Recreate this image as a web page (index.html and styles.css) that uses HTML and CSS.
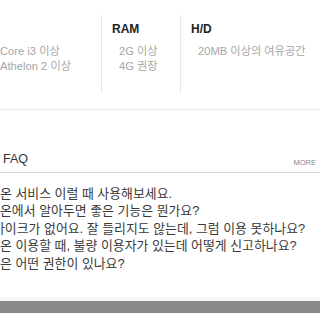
FILE: index.html
```html
<!DOCTYPE html>
<html lang="ko">
<head>
    <meta charset="UTF-8">
    <meta name="viewport" content="width=device-width, initial-scale=1.0">
    <title>시스템 사양 / FAQ</title>
    <link rel="stylesheet" href="styles.css">
</head>
<body>

    <div class="spec">
        <div class="spec-col spec-cpu">
            <ul class="spec-list">
                <li>Core i3 이상</li>
                <li>Athelon 2 이상</li>
            </ul>
        </div>
        <div class="spec-col spec-ram">
            <h4 class="spec-title">RAM</h4>
            <ul class="spec-list">
                <li>2G 이상</li>
                <li>4G 권장</li>
            </ul>
        </div>
        <div class="spec-col spec-hd">
            <h4 class="spec-title">H/D</h4>
            <ul class="spec-list">
                <li>20MB 이상의 여유공간</li>
            </ul>
        </div>
    </div>

    <div class="faq">
        <div class="faq-head">
            <h3 class="faq-title">FAQ</h3>
            <a class="faq-more" href="#">MORE</a>
        </div>
        <ul class="faq-list">
            <li><a href="#">온 서비스 이럴 때 사용해보세요.</a></li>
            <li><a href="#">온에서 알아두면 좋은 기능은 뭔가요?</a></li>
            <li class="cut"><a href="#">마이크가 없어요. 잘 들리지도 않는데, 그럼 이용 못하나요?</a></li>
            <li><a href="#">온 이용할 때, 불량 이용자가 있는데 어떻게 신고하나요?</a></li>
            <li><a href="#">은 어떤 권한이 있나요?</a></li>
        </ul>
    </div>

    <div class="footer"></div>

</body>
</html>
```

FILE: styles.css
```css
body {
    font-family: "Liberation Sans", "Noto Sans CJK KR", sans-serif;
    background-color: #fff;
    color: #333;
    margin: 0;
    padding: 0;
    overflow: hidden;
}

ul {
    list-style: none;
    margin: 0;
    padding: 0;
}

a {
    color: inherit;
    text-decoration: none;
}

/* system spec */
.spec {
    display: flex;
    padding: 15px 0 16px;
    border-bottom: 1px solid #ebebeb;
}

.spec-col {
    box-sizing: border-box;
    height: 78px;
    padding: 5.8px 0 0 10px;
    border-right: 1px solid #e6e6e6;
}

.spec-cpu {
    width: 102px;
    padding-left: 0;
}

.spec-ram { width: 79px; }

.spec-hd {
    flex: 1;
    border-right: none;
}

.spec-title {
    margin: 0;
    font-size: 12px;
    line-height: 17px;
    font-weight: bold;
    color: #222;
}

.spec-list {
    margin-top: 6.3px;
    padding-left: 7px;
    font-size: 11.2px;
    line-height: 14.5px;
    color: #a6a6a6;
}

.spec-cpu .spec-list {
    margin-top: 23.3px;
    padding-left: 0;
}

/* faq */
.faq {
    padding-bottom: 25px;
}

.faq-head {
    display: flex;
    justify-content: space-between;
    align-items: flex-end;
    padding: 39.6px 4px 4.4px 3px;
    border-bottom: 1px solid #d6d6d6;
}

.faq-title {
    margin: 0;
    font-size: 12.5px;
    line-height: 18px;
    font-weight: normal;
    color: #333;
}

.faq-more {
    font-size: 7.5px;
    line-height: 10px;
    color: #888;
}

.faq-list {
    padding-top: 12px;
    font-size: 12.9px;
    line-height: 17.5px;
    color: #3a3a3a;
    white-space: nowrap;
}

.faq-list .cut {
    text-indent: -7px;
}

.footer {
    height: 12px;
    border-top: 4px solid #f7f7f7;
    background-color: #8a8a8a;
}
```
